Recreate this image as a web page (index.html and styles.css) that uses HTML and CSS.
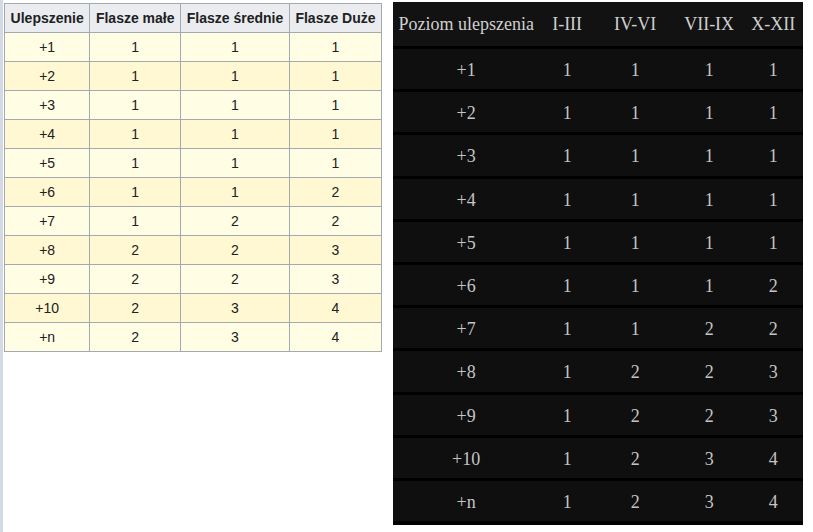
FILE: index.html
```html
<!DOCTYPE html>
<html lang="pl">
<head>
<meta charset="utf-8">
<title>Ulepszenia</title>
<link rel="stylesheet" href="styles.css">
</head>
<body>
<div class="page">
  <div class="strip"></div>
  <table class="wikitable">
    <thead>
      <tr><th>Ulepszenie</th><th>Flasze małe</th><th>Flasze średnie</th><th>Flasze Duże</th></tr>
    </thead>
    <tbody>
      <tr><td>+1</td><td>1</td><td>1</td><td>1</td></tr>
      <tr><td>+2</td><td>1</td><td>1</td><td>1</td></tr>
      <tr><td>+3</td><td>1</td><td>1</td><td>1</td></tr>
      <tr><td>+4</td><td>1</td><td>1</td><td>1</td></tr>
      <tr><td>+5</td><td>1</td><td>1</td><td>1</td></tr>
      <tr><td>+6</td><td>1</td><td>1</td><td>2</td></tr>
      <tr><td>+7</td><td>1</td><td>2</td><td>2</td></tr>
      <tr><td>+8</td><td>2</td><td>2</td><td>3</td></tr>
      <tr><td>+9</td><td>2</td><td>2</td><td>3</td></tr>
      <tr><td>+10</td><td>2</td><td>3</td><td>4</td></tr>
      <tr><td>+n</td><td>2</td><td>3</td><td>4</td></tr>
    </tbody>
  </table>
  <table class="dark">
    <colgroup>
      <col class="c1"><col class="c2"><col class="c3"><col class="c4"><col class="c5">
    </colgroup>
    <thead>
      <tr><th>Poziom ulepszenia</th><th>I-III</th><th>IV-VI</th><th>VII-IX</th><th>X-XII</th></tr>
    </thead>
    <tbody>
      <tr><td>+1</td><td>1</td><td>1</td><td>1</td><td>1</td></tr>
      <tr><td>+2</td><td>1</td><td>1</td><td>1</td><td>1</td></tr>
      <tr><td>+3</td><td>1</td><td>1</td><td>1</td><td>1</td></tr>
      <tr><td>+4</td><td>1</td><td>1</td><td>1</td><td>1</td></tr>
      <tr><td>+5</td><td>1</td><td>1</td><td>1</td><td>1</td></tr>
      <tr><td>+6</td><td>1</td><td>1</td><td>1</td><td>2</td></tr>
      <tr><td>+7</td><td>1</td><td>1</td><td>2</td><td>2</td></tr>
      <tr><td>+8</td><td>1</td><td>2</td><td>2</td><td>3</td></tr>
      <tr><td>+9</td><td>1</td><td>2</td><td>2</td><td>3</td></tr>
      <tr><td>+10</td><td>1</td><td>2</td><td>3</td><td>4</td></tr>
      <tr><td>+n</td><td>1</td><td>2</td><td>3</td><td>4</td></tr>
    </tbody>
  </table>
</div>
</body>
</html>
```
FILE: styles.css
```css
html, body {
  margin: 0;
  padding: 0;
  background: #ffffff;
}

.page {
  display: flex;
  align-items: flex-start;
  min-height: 532px;
}

.strip {
  width: 3px;
  align-self: stretch;
  background: #d3dae6;
  flex: none;
}

.wikitable {
  margin: 3px 0 0 1px;
  border-collapse: collapse;
  border: 1px solid #a2a9b1;
  font-family: "Liberation Sans", Arial, sans-serif;
  font-size: 14px;
  line-height: 22.4px;
  color: #202122;
  flex: none;
}

.wikitable th,
.wikitable td {
  border: 1px solid #a2a9b1;
  padding: 2.8px 5.6px;
  text-align: center;
}

.wikitable th {
  background: #eaecf0;
  font-weight: bold;
}

.wikitable tbody tr:nth-child(odd) td {
  background: #fffde3;
}

.wikitable tbody tr:nth-child(even) td {
  background: #fff8d2;
}

.dark {
  margin: 2px 0 0 11px;
  width: 410px;
  table-layout: fixed;
  border-collapse: collapse;
  background: #0f0f0f;
  font-family: "Liberation Serif", "Times New Roman", serif;
  font-size: 18px;
  color: #c4c4c4;
  flex: none;
}

.dark .c1 { width: 146px; }
.dark .c2 { width: 56px; }
.dark .c3 { width: 80px; }
.dark .c4 { width: 68px; }
.dark .c5 { width: 60px; }

.dark th {
  background: #121212;
  font-weight: normal;
  height: 44px;
  padding: 0;
  text-align: center;
  white-space: nowrap;
  color: #cfcfcf;
}

.dark td {
  height: 37.2px;
  padding: 3px 0 0;
  text-align: center;
  border-top: 3px solid #000000;
}

.dark tbody tr:last-child td {
  border-bottom: 4px solid #000000;
}
```
